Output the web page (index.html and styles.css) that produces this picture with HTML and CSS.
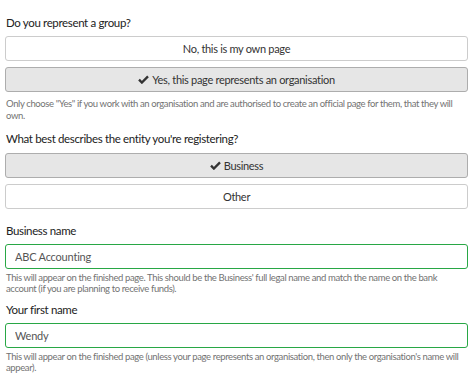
FILE: index.html
```html
<!DOCTYPE html>
<html lang="en">
<head>
  <meta charset="UTF-8" />
  <title>Register a page</title>
  <link rel="stylesheet" href="styles.css">
</head>
<body>
  <form class="form">
    <div class="field">
      <label class="label">Do you represent a group?</label>
      <div class="choices">
        <button type="button" class="choice">No, this is my own page</button>
        <button type="button" class="choice active">
          <svg class="tick" viewBox="0 0 12 10"><path d="M1 5.2 L4.2 8.4 L11 1.6" /></svg>Yes, this page represents an organisation
        </button>
      </div>
      <p class="help">Only choose "Yes" if you work with an organisation and are authorised to create an official page for them, that they will own.</p>
    </div>

    <div class="field entity">
      <label class="label">What best describes the entity you're registering?</label>
      <div class="choices">
        <button type="button" class="choice active">
          <svg class="tick" viewBox="0 0 12 10"><path d="M1 5.2 L4.2 8.4 L11 1.6" /></svg>Business
        </button>
        <button type="button" class="choice">Other</button>
      </div>
    </div>

    <div class="field text-field first">
      <label class="label">Business name</label>
      <input class="input valid" type="text" value="ABC Accounting" />
      <p class="help">This will appear on the finished page. This should be the Business' full legal name and match the name on the bank account (if you are planning to receive funds).</p>
    </div>

    <div class="field text-field">
      <label class="label">Your first name</label>
      <input class="input valid" type="text" value="Wendy" />
      <p class="help">This will appear on the finished page (unless your page represents an organisation, then only the organisation's name will appear).</p>
    </div>
  </form>
</body>
</html>
```

FILE: styles.css
```css
* {
  margin: 0;
  padding: 0;
  box-sizing: border-box;
  font-family: Lato, 'Noto Sans', sans-serif;
}

body {
  background: #fff;
  color: #333;
}

.form {
  padding: 14px 8px 0 5px;
}

.label {
  display: block;
  font-size: 11.5px;
  letter-spacing: -0.35px;
  line-height: 18px;
  color: #222;
  padding-left: 1px;
  margin-bottom: 4px;
}

.choices {
  display: flex;
  flex-direction: column;
  gap: 6px;
}

.choice {
  display: flex;
  align-items: center;
  justify-content: center;
  height: 25px;
  width: 100%;
  background: #fff;
  border: 1px solid #ccc;
  border-radius: 3px;
  font-size: 11px;
  letter-spacing: -0.3px;
  color: #333;
  cursor: pointer;
}

.choice.active {
  background: #e6e6e6;
  border-color: #adadad;
}

.tick {
  width: 11px;
  height: 9px;
  margin-right: 3px;
}

.tick path {
  fill: none;
  stroke: #333;
  stroke-width: 2.6;
}

.help {
  font-size: 9.5px;
  letter-spacing: -0.38px;
  line-height: 12px;
  color: #737373;
  margin-top: 6px;
  padding-left: 1px;
}

.entity {
  margin-top: 8px;
}

.entity .label {
  margin-bottom: 5px;
}

.text-field {
  margin-top: 7px;
}

.text-field.first {
  margin-top: 13px;
}

.text-field .label {
  margin-bottom: 4px;
}

.text-field .help {
  margin-top: 3px;
  line-height: 11px;
}

.input {
  display: block;
  width: 100%;
  height: 25px;
  padding: 0 9px;
  border: 1px solid #ccc;
  border-radius: 3px;
  font-size: 11px;
  letter-spacing: -0.2px;
  color: #555;
  outline: none;
}

.input.valid {
  border-color: #28a745;
}
```
